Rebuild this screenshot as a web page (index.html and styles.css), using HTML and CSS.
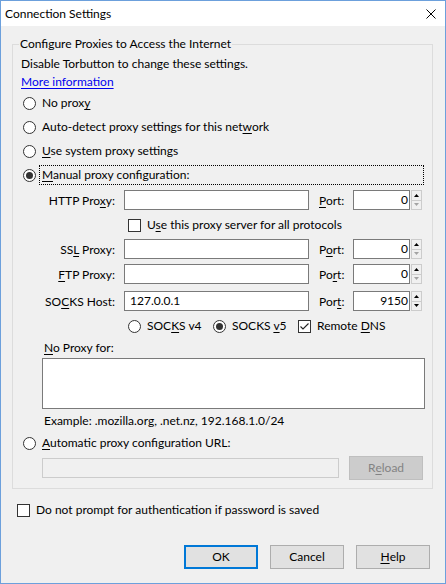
FILE: index.html
```html
<!DOCTYPE html>
<html>
<head>
<meta charset="utf-8">
<title>Connection Settings</title>
<link rel="stylesheet" href="styles.css">
</head>
<body>
<div class="window">
  <div class="titlebar">
    <span class="title">Connection Settings</span>
    <svg class="close" width="10" height="10" viewBox="0 0 10 10"><path d="M0.5 0.5L9.5 9.5M9.5 0.5L0.5 9.5" stroke="#000" stroke-width="1" fill="none"/></svg>
  </div>
  <div class="content">
    <fieldset class="group">
      <legend>Configure Proxies to Access the Internet</legend>
      <div class="line">Disable Torbutton to change these settings.</div>
      <div class="line"><a class="link" href="#">More information</a></div>
      <div class="opt"><span class="radio"></span><span class="lbl">No prox<u>y</u></span></div>
      <div class="opt"><span class="radio"></span><span class="lbl">Auto-detect proxy settings for this net<u>w</u>ork</span></div>
      <div class="opt"><span class="radio"></span><span class="lbl"><u>U</u>se system proxy settings</span></div>
      <div class="opt manual"><span class="radio on"></span><span class="lbl focus"><u>M</u>anual proxy configuration:</span></div>

      <div class="prow r-http">
        <span class="plabel">HTTP Pro<u>x</u>y:</span>
        <span class="field"></span>
        <span class="portl"><u>P</u>ort:</span>
        <span class="port">0</span>
        <span class="spin"><span class="arr"><svg width="5" height="3" viewBox="0 0 5 3"><path d="M0 3L2.5 0L5 3Z" fill="#000"/></svg></span><span class="arr"><svg width="5" height="3" viewBox="0 0 5 3"><path d="M0 0L2.5 3L5 0Z" fill="#a3a3a3"/></svg></span></span>
      </div>
      <div class="crow"><span class="check"></span><span class="lbl">U<u>s</u>e this proxy server for all protocols</span></div>
      <div class="prow r-ssl">
        <span class="plabel">SS<u>L</u> Proxy:</span>
        <span class="field"></span>
        <span class="portl">P<u>o</u>rt:</span>
        <span class="port">0</span>
        <span class="spin"><span class="arr"><svg width="5" height="3" viewBox="0 0 5 3"><path d="M0 3L2.5 0L5 3Z" fill="#000"/></svg></span><span class="arr"><svg width="5" height="3" viewBox="0 0 5 3"><path d="M0 0L2.5 3L5 0Z" fill="#a3a3a3"/></svg></span></span>
      </div>
      <div class="prow r-ftp">
        <span class="plabel"><u>F</u>TP Proxy:</span>
        <span class="field"></span>
        <span class="portl">Po<u>r</u>t:</span>
        <span class="port">0</span>
        <span class="spin"><span class="arr"><svg width="5" height="3" viewBox="0 0 5 3"><path d="M0 3L2.5 0L5 3Z" fill="#000"/></svg></span><span class="arr"><svg width="5" height="3" viewBox="0 0 5 3"><path d="M0 0L2.5 3L5 0Z" fill="#a3a3a3"/></svg></span></span>
      </div>
      <div class="prow r-socks">
        <span class="plabel">SO<u>C</u>KS Host:</span>
        <span class="field">127.0.0.1</span>
        <span class="portl">Por<u>t</u>:</span>
        <span class="port">9150</span>
        <span class="spin"><span class="arr"><svg width="5" height="3" viewBox="0 0 5 3"><path d="M0 3L2.5 0L5 3Z" fill="#000"/></svg></span><span class="arr"><svg width="5" height="3" viewBox="0 0 5 3"><path d="M0 0L2.5 3L5 0Z" fill="#000"/></svg></span></span>
      </div>
      <div class="vrow">
        <span class="vitem"><span class="radio"></span><span class="lbl">SOC<u>K</u>S v4</span></span>
        <span class="vitem"><span class="radio on"></span><span class="lbl">SOCKS <u>v</u>5</span></span>
        <span class="vitem"><span class="check"><svg width="11" height="11" viewBox="0 0 11 11"><path d="M1.5 5.5L4 8L9.5 2.5" stroke="#222" stroke-width="1.1" fill="none"/></svg></span><span class="lbl">Remote <u>D</u>NS</span></span>
      </div>
      <div class="nplabel"><u>N</u>o Proxy for:</div>
      <div class="textarea"></div>
      <div class="example">Example: .mozilla.org, .net.nz, 192.168.1.0/24</div>
      <div class="opt autourl"><span class="radio"></span><span class="lbl"><u>A</u>utomatic proxy configuration URL:</span></div>
      <div class="urlrow">
        <span class="urlfield"></span>
        <span class="btn disabled">R<u>e</u>load</span>
      </div>
    </fieldset>
    <div class="bottomcheck"><span class="check"></span><span class="lbl">Do not prompt for authent<u>i</u>cation if password is saved</span></div>
    <div class="buttons">
      <span class="btn default">OK</span>
      <span class="btn">Cancel</span>
      <span class="btn"><u>H</u>elp</span>
    </div>
  </div>
</div>
</body>
</html>
```
FILE: styles.css
```css
* { box-sizing: border-box; }
html, body { margin: 0; padding: 0; }
body {
  font-family: Lato, "Noto Sans", sans-serif;
  font-size: 12px;
  color: #000;
  background: #fff;
}
u { text-decoration: underline; text-underline-offset: 2px; }

.window {
  width: 446px;
  height: 584px;
  border: 1px solid #6ca0dc;
  background: #f0f0f0;
  display: flex;
  flex-direction: column;
  overflow: hidden;
}
.titlebar {
  flex: none;
  height: 25px;
  background: #fff;
  display: flex;
  align-items: center;
  justify-content: space-between;
  padding: 0 9px 0 4px;
}
.title { font-size: 12px; }
.close { display: block; }

.content { display: flex; flex-direction: column; }

.group {
  margin: 9px 12px 0 11px;
  padding: 2px 0 8px 0;
  border: 1px solid #dcdcdc;
  min-width: 0;
}
.group legend {
  padding: 0 1px;
  margin-left: 6px;
  height: 18px;
  line-height: 18px;
}

.line { height: 18px; line-height: 18px; padding-left: 8px; }
.link { color: #0000ee; text-decoration: underline; text-underline-offset: 2px; }

.opt {
  height: 24px;
  display: flex;
  align-items: center;
  padding-left: 10px;
}
.lbl { margin-left: 6px; line-height: 18px; white-space: nowrap; }
.manual .focus {
  margin-left: 3px;
  margin-right: 8px;
  flex: 1;
  border: 1px dotted #000;
  padding: 0 2px;
}

.radio {
  flex: none;
  width: 13px;
  height: 13px;
  border: 1px solid #333;
  border-radius: 50%;
  background: #fff;
  display: flex;
  align-items: center;
  justify-content: center;
}
.radio.on::after {
  content: "";
  width: 7px;
  height: 7px;
  border-radius: 50%;
  background: #333;
}
.check {
  flex: none;
  width: 13px;
  height: 13px;
  border: 1px solid #333;
  background: #fff;
  display: flex;
  align-items: center;
  justify-content: center;
}
.check svg { display: block; }

.prow {
  display: flex;
  align-items: center;
  height: 20px;
}
.r-http { margin-top: 3px; }
.r-ssl { margin-top: 4px; }
.r-ftp { margin-top: 5px; }
.r-socks { margin-top: 7px; }
.plabel { width: 102px; text-align: right; margin-right: 9px; white-space: nowrap; }
.field {
  width: 185px;
  height: 20px;
  border: 1px solid #7a7a7a;
  background: #fff;
  padding: 0 5px;
  line-height: 18px;
}
.portl { width: 34px; margin-left: 10px; }
.port {
  width: 57px;
  height: 20px;
  border: 1px solid #7a7a7a;
  background: #fff;
  text-align: right;
  padding-right: 1px;
  line-height: 18px;
}
.spin {
  width: 12px;
  height: 20px;
  display: flex;
  flex-direction: column;
  padding-left: 1px;
}
.arr {
  flex: 1;
  border: 1px solid #cccccc;
  background: #f0f0f0;
  display: flex;
  align-items: center;
  justify-content: center;
}
.arr + .arr { border-top: none; }
.arr svg { display: block; }

.crow {
  display: flex;
  align-items: center;
  height: 20px;
  margin-top: 5px;
  padding-left: 115px;
}

.vrow {
  display: flex;
  align-items: center;
  height: 20px;
  margin-top: 5px;
  padding-left: 115px;
}
.vitem { width: 85px; display: flex; align-items: center; }

.nplabel { height: 18px; line-height: 18px; margin-top: 3px; padding-left: 31px; }
.textarea {
  margin-top: 1px;
  margin-left: 29px;
  width: 383px;
  height: 51px;
  border: 1px solid #7a7a7a;
  background: #fff;
}
.example { height: 18px; line-height: 18px; margin-top: 3px; padding-left: 31px; }
.autourl { margin-top: 1px; }

.urlrow {
  display: flex;
  align-items: center;
  height: 24px;
  margin-top: 1px;
  padding-left: 29px;
}
.urlfield {
  width: 297px;
  height: 20px;
  border: 1px solid #cccccc;
  background: #f0f0f0;
}
.urlrow .btn { margin-left: 10px; }

.btn {
  width: 74px;
  height: 24px;
  border: 1px solid #adadad;
  background: #e1e1e1;
  display: flex;
  align-items: center;
  justify-content: center;
  line-height: 18px;
}
.btn.default { border: 2px solid #0078d7; }
.btn.disabled { background: #cccccc; border-color: #bfbfbf; color: #838383; }

.bottomcheck {
  display: flex;
  align-items: center;
  height: 20px;
  margin-top: 11px;
  padding-left: 16px;
}
.buttons {
  display: flex;
  justify-content: flex-end;
  gap: 12px;
  margin-top: 25px;
  padding-right: 15px;
}
```
